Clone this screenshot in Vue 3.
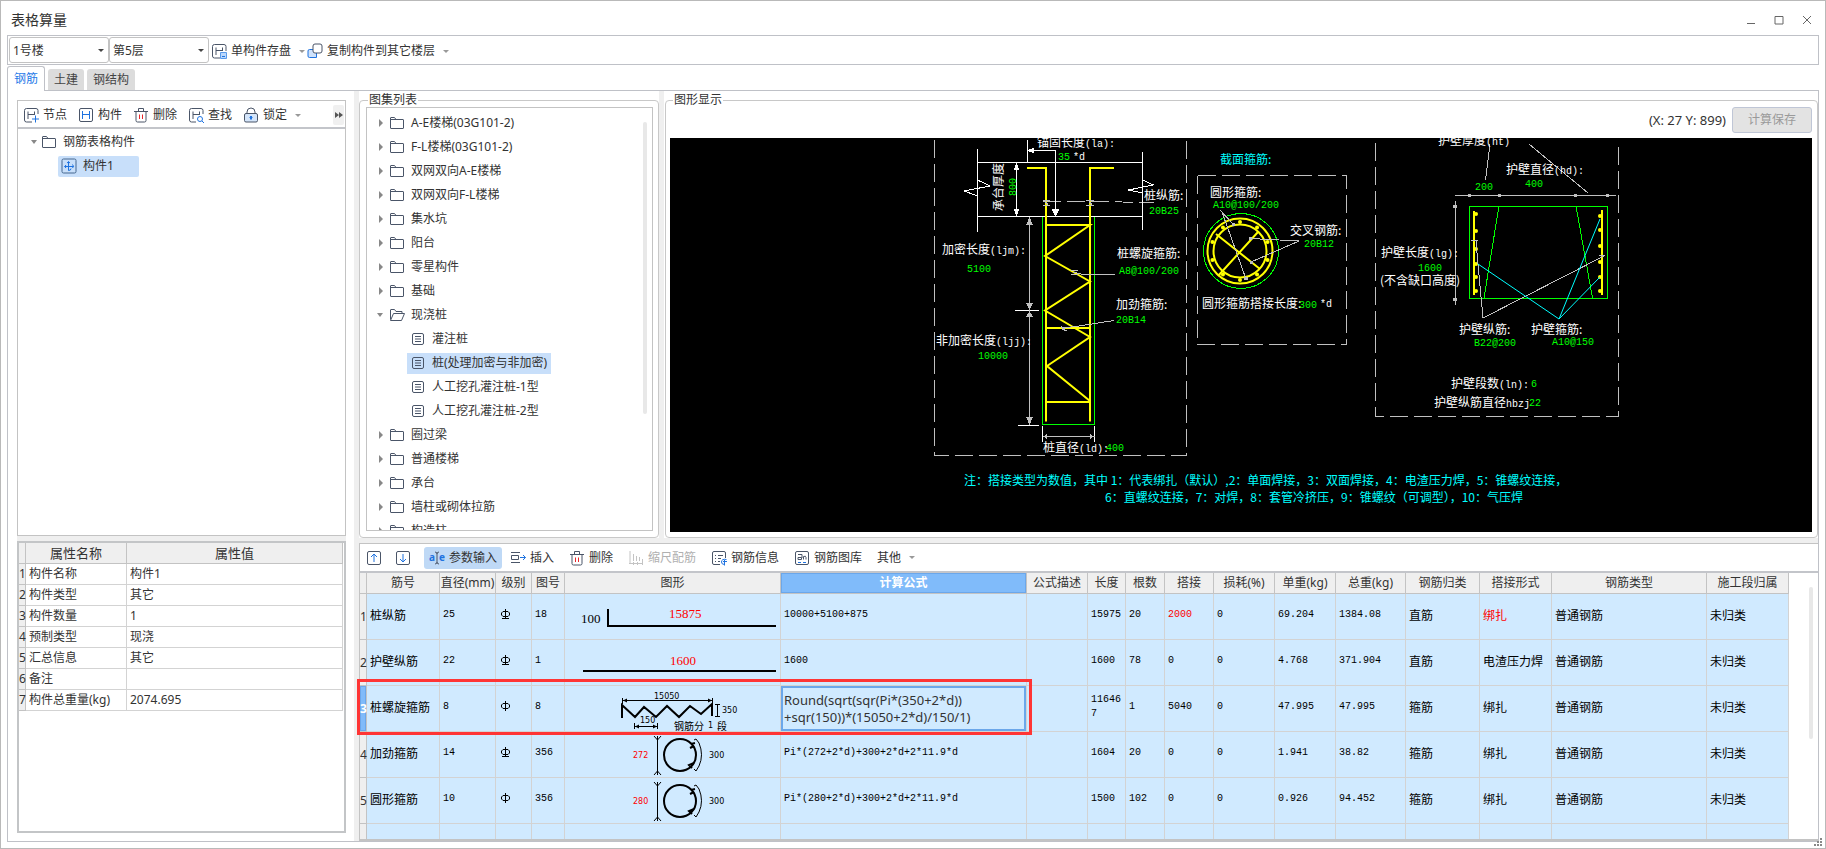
<script setup>
import { ref } from 'vue'

const building = ref('1号楼')
const floor = ref('第5层')

const icons = {
  save: '<path d="M9 15H3.500Q1.500 15 1.500 13V3.500Q1.500 1.500 3.500 1.500H13Q15 1.500 15 3.500V8"/><path d="M5 4.500V12M5 7.500H11.500M11.500 4.500V8" /><path fill="#bcd8fb" stroke="#5b9bea" d="M9.500 9.500H15.500V15.500H9.500Z"/><path fill="#fff" stroke="#1f73e0" d="M11 13.500H14"/>',
  copy: '<path fill="#cfe2fb" stroke="#1f73e0" d="M2.500 6.500H9.500V14.500H2.500Q1 14.500 1 13V8Q1 6.500 2.500 6.500Z"/><rect fill="#fff" x="6" y="1" width="9" height="9" rx="2"/>',
  node: '<path d="M9 15H3.500Q1.500 15 1.500 13V3.500Q1.500 1.500 3.500 1.500H13Q15 1.500 15 3.500V7"/><path d="M5 4.500V12M5 7.500H11.500M11.500 4.500V8"/><path stroke="#1f73e0" d="M12.500 8.500V15.500M9 12H16"/>',
  member: '<rect x="1.500" y="1.500" width="13" height="13" rx="1.500"/><path stroke="#1f73e0" d="M4.500 4V12M11.500 4V12M4.500 7.500H11.500"/>',
  trash: '<path d="M1 4.500H15M5.500 4V1.500H10.500V4M3 5V13.500Q3 15 4.500 15H11.500Q13 15 13 13.500V5"/><path stroke="#e8262b" d="M6.500 7.500V12M9.500 7.500V12"/>',
  find: '<path d="M8 15H3.500Q1.500 15 1.500 13V3.500Q1.500 1.500 3.500 1.500H13Q15 1.500 15 3.500V7"/><path d="M5 4.500V12M5 7.500H11.500M11.500 4.500V8"/><circle stroke="#1f73e0" cx="12" cy="12" r="2.500"/><path stroke="#1f73e0" d="M14 14L16 16"/>',
  lock: '<path d="M4 7V5Q4 1 8 1T12 5V7"/><rect x="1.500" y="6.500" width="13" height="8.500" rx="1.500" fill="#d4e5fa"/><path stroke="#1f73e0" stroke-width="2" d="M8 9V12.500"/><path stroke="#1f73e0" d="M6.500 10.500H9.500"/>',
  folder: '<path d="M1.500 13V3Q1.500 2.500 2 2.500H5.500L7 4.500H14Q14.500 4.500 14.500 5V13Q14.500 13.500 14 13.500H2Q1.500 13.500 1.500 13ZM1.500 4.500H7"/>',
  open: '<path d="M1.500 12.500V3Q1.500 2.500 2 2.500H5.500L7 4.500H13V6.500M1.500 13.500L4.500 6.500H15.500L12.500 13.500Z"/>',
  doc: '<rect x="2.500" y="2.500" width="11" height="11" rx="1.500"/><path d="M5 5.500H11M5 8H11M5 10.500H11"/>',
  rebar: '<rect x="1" y="1" width="14" height="14" rx="1.500" stroke="#44678f"/><path stroke="#1f73e0" d="M7.500 3.500V12.500M3.500 8.500H12.500M6 5Q7.500 2.500 9 5M11.500 6.500Q13.500 8.500 11.500 10M5 7Q2.500 8.500 5 10M7.500 12.500Q10 12.500 10 10.500"/>',
  up: '<rect x="1.500" y="1.500" width="13" height="13" rx="1.500"/><path stroke="#1f73e0" d="M8 4V12M5 7L8 4L11 7"/>',
  down: '<rect x="1.500" y="1.500" width="13" height="13" rx="1.500"/><path stroke="#1f73e0" d="M8 4V12M5 9L8 12L11 9"/>',
  insert: '<path d="M1 2.500H10M1 12.500H10M1.500 5.500H8.500V9.500H1.500Z"/><path stroke="#1f73e0" d="M10 7.500H15.500M13 5L15.500 7.500L13 10"/>',
  scale: '<path stroke="#c4c4c4" d="M2 1V14M5.500 4V11M8.500 6V11M11.500 7V11M1 13.500H14M5.500 12V15M9.500 12V15M14.500 9V15"/>',
  info: '<path d="M9 14.500H3Q1.500 14.500 1.500 13V3Q1.500 1.500 3 1.500H13Q14.500 1.500 14.500 3V8M4 5.500H5M7 5.500H12M4 8.500H5M7 8.500H10M4 11.500H5M7 11.500H9"/><path stroke="#1f73e0" d="M15.500 9.500Q10.500 8.500 10.500 12Q10.500 14.500 13.500 14.500M12 11.500H16M13.500 10V15.500"/>',
  library: '<rect x="1.500" y="1.500" width="13" height="13" rx="1.500"/><path d="M4 4.500H8V8M4 9.500V7.500H7.500V9.500H4M9.500 9.500V6.500Q12 5.500 12 7.500V9.500"/><path stroke="#1f73e0" d="M4 12.500H7M9 12.500H12"/>',
}

const tree = [
  { t: 'A-E楼梯(03G101-2)' }, { t: 'F-L楼梯(03G101-2)' }, { t: '双网双向A-E楼梯' }, { t: '双网双向F-L楼梯' },
  { t: '集水坑' }, { t: '阳台' }, { t: '零星构件' }, { t: '基础' }, { t: '现浇桩', open: true },
  { t: '灌注桩', leaf: true }, { t: '桩(处理加密与非加密)', leaf: true, sel: true },
  { t: '人工挖孔灌注桩-1型', leaf: true }, { t: '人工挖孔灌注桩-2型', leaf: true },
  { t: '圈过梁' }, { t: '普通楼梯' }, { t: '承台' }, { t: '墙柱或砌体拉筋' }, { t: '构造柱' },
]

const props = [
  ['构件名称', '构件1'], ['构件类型', '其它'], ['构件数量', '1'], ['预制类型', '现浇'],
  ['汇总信息', '其它'], ['备注', ''], ['构件总重量(kg)', '2074.695'],
]

const columns = [
  ['筋号', 73], ['直径(mm)', 56], ['级别', 36], ['图号', 33], ['图形', 216], ['计算公式', 246],
  ['公式描述', 61], ['长度', 38], ['根数', 39], ['搭接', 49], ['损耗(%)', 61], ['单重(kg)', 61],
  ['总重(kg)', 70], ['钢筋归类', 74], ['搭接形式', 72], ['钢筋类型', 155], ['施工段归属', 82],
]

const rows = [
  ['桩纵筋', '25', 'B', '18', '#L', '10000+5100+875', '', '15975', '20', '2000', '0', '69.204', '1384.08', '直筋', '绑扎', '普通钢筋', '未归类'],
  ['护壁纵筋', '22', 'B', '1', '#I', '1600', '', '1600', '78', '0', '0', '4.768', '371.904', '直筋', '电渣压力焊', '普通钢筋', '未归类'],
  ['桩螺旋箍筋', '8', 'A', '8', '#Z', 'Round(sqrt(sqr(Pi*(350+2*d))\n+sqr(150))*(15050+2*d)/150/1)', '', '116467', '1', '5040', '0', '47.995', '47.995', '箍筋', '绑扎', '普通钢筋', '未归类'],
  ['加劲箍筋', '14', 'B', '356', '272', 'Pi*(272+2*d)+300+2*d+2*11.9*d', '', '1604', '20', '0', '0', '1.941', '38.82', '箍筋', '绑扎', '普通钢筋', '未归类'],
  ['圆形箍筋', '10', 'A', '356', '280', 'Pi*(280+2*d)+300+2*d+2*11.9*d', '', '1500', '102', '0', '0', '0.926', '94.452', '箍筋', '绑扎', '普通钢筋', '未归类'],
  ['交叉钢筋', '', '', '', '', '', '', '', '', '', '', '', '', '直筋', '绑扎', '普通钢筋', '未归类'],
]
const isRed = (r, c) => r === 0 && (c === 9 || c === 14)
const isNum = (v) => /^[\x20-\x7e]+$/.test(v)

const white = [
  [1037, 147, '锚固长度', '(la):'], [942, 254, '加密长度', '(ljm):'], [936, 345, '非加密长度', '(ljj):'],
  [1144, 200, '桩纵筋:', ''], [1117, 258, '桩螺旋箍筋:', ''], [1116, 309, '加劲箍筋:', ''], [1043, 452, '桩直径', '(ld):'],
  [1210, 197, '圆形箍筋:', ''], [1290, 235, '交叉钢筋:', ''], [1202, 308, '圆形箍筋搭接长度:', ''],
  [1438, 145, '护壁厚度', '(ht)'], [1506, 174, '护壁直径', '(hd):'], [1381, 257, '护壁长度', '(lg):'],
  [1380, 285, '(不含缺口高度)', ''], [1459, 334, '护壁纵筋:', ''], [1531, 334, '护壁箍筋:', ''],
  [1451, 388, '护壁段数', '(ln):'], [1434, 407, '护壁纵筋直径', 'hbzj'],
  [1073, 160, '', '*d'], [1320, 307, '', '*d'],
]
const green = [
  [1058, 160, '35'], [967, 272, '5100'], [978, 359, '10000'], [1149, 214, '20B25'], [1119, 274, 'A8@100/200'],
  [1116, 323, '20B14'], [1106, 451, '400'], [1213, 208, 'A10@100/200'], [1304, 247, '20B12'], [1299, 308, '300'],
  [1525, 187, '400'], [1475, 190, '200'], [1418, 271, '1600'], [1474, 346, 'B22@200'], [1552, 345, 'A10@150'],
  [1531, 387, '6'], [1529, 406, '22'],
]
const ringDots = Array.from({ length: 10 }, (_, i) => {
  const a = (i * Math.PI) / 5 - Math.PI / 2
  return [1240 + 29 * Math.cos(a), 251 + 29 * Math.sin(a)]
})
const wallDots = [
  ...[214, 231, 249, 264, 277, 291].map((y) => [1476, y]),
  ...[216, 230, 246, 262, 277, 291].map((y) => [1600, y]),
]
</script>

<template>
  <main class="window">
    <header class="title">
      <h1>表格算量</h1>
      <div class="winbtns">
        <button aria-label="最小化"><svg width="10" height="10"><path d="M1 8.500H9" /></svg></button>
        <button aria-label="最大化"><svg width="10" height="10"><path d="M1 1.500H9V9H1Z" /></svg></button>
        <button aria-label="关闭"><svg width="10" height="10"><path d="M1 1L9 9M9 1L1 9" /></svg></button>
      </div>
    </header>

    <div class="topbar">
      <div class="combo"><select v-model="building" aria-label="楼栋"><option>1号楼</option></select><i class="caret dark"></i></div>
      <div class="combo"><select v-model="floor" aria-label="楼层"><option>第5层</option></select><i class="caret dark"></i></div>
      <button class="tool"><svg class="ico" viewBox="0 0 16 16" v-html="icons.save"></svg>单构件存盘<i class="caret"></i></button>
      <button class="tool"><svg class="ico" viewBox="0 0 16 16" v-html="icons.copy"></svg>复制构件到其它楼层<i class="caret"></i></button>
    </div>

    <nav class="tabs">
      <button class="tab on">钢筋</button>
      <button class="tab">土建</button>
      <button class="tab">钢结构</button>
    </nav>

    <div class="pane">
      <div class="left">
        <section class="tree-panel">
          <div class="bar">
            <button class="tool"><svg class="ico" viewBox="0 0 16 16" v-html="icons.node"></svg>节点</button>
            <button class="tool"><svg class="ico" viewBox="0 0 16 16" v-html="icons.member"></svg>构件</button>
            <button class="tool"><svg class="ico" viewBox="0 0 16 16" v-html="icons.trash"></svg>删除</button>
            <button class="tool"><svg class="ico" viewBox="0 0 16 16" v-html="icons.find"></svg>查找</button>
            <button class="tool"><svg class="ico" viewBox="0 0 16 16" v-html="icons.lock"></svg>锁定<i class="caret"></i></button>
            <button class="more" aria-label="更多"><svg width="8" height="6"><path d="M0 0L4 3L0 6ZM4 0L8 3L4 6Z" fill="#555" /></svg></button>
          </div>
          <ul class="members">
            <li><i class="arrow down"></i><svg class="ico" viewBox="0 0 16 16" v-html="icons.folder"></svg><span>钢筋表格构件</span></li>
            <li><span class="picked"><svg class="ico" viewBox="0 0 16 16" v-html="icons.rebar"></svg>构件1</span></li>
          </ul>
        </section>
        <div class="hsplit"></div>
        <section class="props">
          <table>
            <colgroup><col class="c0" /><col class="c1" /><col /></colgroup>
            <thead><tr><th></th><th>属性名称</th><th>属性值</th></tr></thead>
            <tbody>
              <tr v-for="(p, i) in props" :key="i"><th>{{ i + 1 }}</th><td>{{ p[0] }}</td><td>{{ p[1] }}</td></tr>
            </tbody>
          </table>
        </section>
      </div>
      <div class="vsplit"></div>
      <div class="right">
        <div class="upper">
          <fieldset class="atlas">
            <legend>图集列表</legend>
            <div class="listbox">
              <ul>
                <li v-for="n in tree" :key="n.t" :class="{ leaf: n.leaf }">
                  <i v-if="!n.leaf" class="arrow" :class="{ down: n.open }"></i>
                  <span class="node" :class="{ sel: n.sel }">
                    <svg class="ico" viewBox="0 0 16 16" v-html="n.leaf ? icons.doc : n.open ? icons.open : icons.folder"></svg>{{ n.t }}
                  </span>
                </li>
              </ul>
              <div class="thumb"></div>
            </div>
          </fieldset>
          <div class="vsplit"></div>
          <fieldset class="view">
            <legend>图形显示</legend>
            <div class="viewhead"><output>(X: 27 Y: 899)</output><button disabled>计算保存</button></div>
            <div class="canvas">
              <svg class="cad" width="100%" height="100%">
                <g transform="translate(-670 -138)" fill="none">
                  <g stroke="#c0c0c0" stroke-dasharray="18 6" shape-rendering="crispEdges">
                    <path d="M934.500 140V455.500H1186.500V138" />
                    <path d="M1197.500 175.500V344.500H1346.500M1197.500 175.500H1346.500V344.500" />
                    <path d="M1375.500 143V416.500H1618.500V143" />
                    <path d="M1043 201.500H1090L1154 202.500" />
                  </g>
                  <g stroke="#fff" shape-rendering="crispEdges">
                    <path d="M977.500 149V232M1142.500 152V230M977.500 162.500H1142.500M977.500 216.500H1142.500" />
                    <path d="M1027.500 140V162M1027 150.500H1055.500V216M1016.500 163V216" />
                    <path d="M977.500 180L990 186L964 191L977.500 196M1142.500 180L1153.500 185L1128.500 190L1142.500 193" />
                    <path d="M1015 310.500H1039M1018 425.500H1039M1042.500 426V442M1094.500 426V442" />
                    <path fill="#fff" stroke="none" d="M1027 150.500L1034 147.500V153.500ZM1051.500 209H1059.500L1055.500 217ZM1013.500 170H1019.500L1016.500 163ZM1013.500 209H1019.500L1016.500 216Z" />
                  </g>
                  <g stroke="#0f0" shape-rendering="crispEdges">
                    <path d="M1042.500 217V424.500H1094.500V217" />
                    <path d="M1469.500 206.500H1607.500V298.500H1469.500ZM1499 206L1484 298M1576 206L1592.500 298" />
                    <circle cx="1241" cy="251" r="37.500" />
                  </g>
                  <g stroke="#ff0" stroke-width="2">
                    <path d="M1027 168H1046V421.500M1114 168H1090V421.500" />
                    <path d="M1046 225H1090L1045 256L1090 281.500L1045 310.500L1090 337L1047 366L1090 401M1046 328H1090M1046 402H1090" />
                    <circle cx="1240" cy="251" r="32.500" /><circle cx="1240" cy="251" r="26.500" />
                    <path d="M1216 234L1260 269M1258 232L1218 276M1474 211V295M1602 210V295" />
                  </g>
                  <g fill="#ff0">
                    <circle v-for="(d, i) in ringDots" :key="i" :cx="d[0]" :cy="d[1]" r="2" />
                    <circle v-for="(d, i) in wallDots" :key="'w' + i" :cx="d[0]" :cy="d[1]" r="2" />
                  </g>
                  <g stroke="#c0c0c0" shape-rendering="crispEdges">
                    <path d="M1029.500 218V424M1042.500 436.500H1094.500" />
                    <path fill="#c0c0c0" stroke="none" d="M1026 225H1033L1029.500 217ZM1026 303H1033L1029.500 310ZM1026 317H1033L1029.500 311ZM1026 417H1033L1029.500 425ZM1043 436.500L1047 434V439ZM1094 436.500L1090 434V439Z" />
                    <path d="M1043 200.500H1050M1043 205.500H1050M1044 200L1049 206M1086 200.500H1094M1086 205.500H1094M1088 200L1093 206" />
                    <path d="M1071 270.500H1078M1071 274.500H1078M1073 272L1083 274.500H1115M1063 328L1079 326L1114 320.500M1061 326L1064 330H1067" />
                    <path d="M1220 210L1233 224M1222 212L1246 279M1250 238.500L1299 241L1251 262" />
                    <path d="M1490 144L1485.500 180M1529 144L1588 193M1455 195.500H1616M1455.500 201V305" />
                    <path d="M1471 240.500H1478M1476 241L1478 264L1483 318L1604 256M1599 255.500H1605" />
                    <path fill="#c0c0c0" stroke="none" d="M1249 237H1252V240H1249ZM1250 261H1253V264H1250ZM1232 223H1235V226H1232ZM1244 277H1248V280H1244ZM1468 194H1471V197H1468ZM1498 194H1501V197H1498ZM1574 194H1577V197H1574ZM1606 194H1609V197H1606ZM1453 205H1457V208H1453ZM1453 298H1457V301H1453ZM1062 327H1065V330H1062Z" />
                  </g>
                  <path stroke="#0ff" d="M1478 264L1559 319L1600 219M1559 319L1600 277" />
                  <g fill="#fff">
                    <text v-for="(w, i) in white" :key="i" :x="w[0]" :y="w[1]">{{ w[2] }}<tspan class="mono">{{ w[3] }}</tspan></text>
                    <text transform="translate(1003 211) rotate(-90)">承台厚度</text>
                  </g>
                  <g fill="#0f0" class="mono">
                    <text v-for="(g, i) in green" :key="i" :x="g[0]" :y="g[1]">{{ g[2] }}</text>
                    <text transform="translate(1016 196) rotate(-90)">800</text>
                  </g>
                  <g fill="#0ff">
                    <text x="1220" y="164">截面箍筋:</text>
                    <text x="964" y="485">注：搭接类型为数值，其中 1：代表绑扎（默认）,2：单面焊接，3：双面焊接，4：电渣压力焊，5：锥螺纹连接，</text>
                    <text x="1105" y="502">6：直螺纹连接，7：对焊，8：套管冷挤压，9：锥螺纹（可调型），10：气压焊</text>
                  </g>
                </g>
              </svg>
            </div>
          </fieldset>
        </div>
        <div class="hsplit"></div>
        <section class="lower">
          <div class="bar">
            <button class="tool" aria-label="上移"><svg class="ico" viewBox="0 0 16 16" v-html="icons.up"></svg></button>
            <button class="tool" aria-label="下移"><svg class="ico" viewBox="0 0 16 16" v-html="icons.down"></svg></button>
            <button class="tool active">
              <svg class="ico" viewBox="0 0 16 16"><text x="0" y="11" class="ae">a</text><text x="10" y="11" class="ae">e</text><path d="M6 2Q8 2 8 4V12Q8 14 6 14M10 2Q8 2 8 4M8 12Q8 14 10 14" /></svg>参数输入
            </button>
            <button class="tool"><svg class="ico" viewBox="0 0 16 16" v-html="icons.insert"></svg>插入</button>
            <button class="tool"><svg class="ico" viewBox="0 0 16 16" v-html="icons.trash"></svg>删除</button>
            <button class="tool" disabled><svg class="ico" viewBox="0 0 16 16" v-html="icons.scale"></svg>缩尺配筋</button>
            <button class="tool"><svg class="ico" viewBox="0 0 16 16" v-html="icons.info"></svg>钢筋信息</button>
            <button class="tool"><svg class="ico" viewBox="0 0 16 16" v-html="icons.library"></svg>钢筋图库</button>
            <button class="tool">其他<i class="caret"></i></button>
          </div>
          <div class="grid">
            <table>
              <colgroup><col class="c0" /><col v-for="c in columns" :key="c[0]" :style="{ width: c[1] + 'px' }" /></colgroup>
              <thead>
                <tr><th></th><th v-for="(c, i) in columns" :key="c[0]" :class="{ cur: i === 5 }">{{ c[0] }}</th></tr>
              </thead>
              <tbody>
                <tr v-for="(r, ri) in rows" :key="ri">
                  <th :class="{ cur: ri === 2 }">{{ ri + 1 }}</th>
                  <td v-for="(v, ci) in r" :key="ci" :class="{ num: isNum(v), red: isRed(ri, ci), edit: ri === 2 && ci === 5, shape: ci === 4 }">
                    <svg v-if="ci === 2 && v" class="grade" width="9" height="11" fill="none" stroke="#000">
                      <path d="M4.500 0V10M2 2.500H7L8.500 4V6L7 7.500H2L0.500 6V4Z" /><path v-if="v === 'B'" d="M1 9.500H8" />
                    </svg>
                    <svg v-else-if="ci === 4 && v" class="draw" width="215" height="45" fill="none" stroke="#000">
                      <template v-if="v === '#L'">
                        <path stroke-width="2" d="M43 15V32H211" /><text x="16" y="29">100</text><text x="104" y="24" class="r">15875</text>
                      </template>
                      <template v-else-if="v === '#I'">
                        <path stroke-width="2" d="M18 31H211" /><text x="105" y="25" class="r">1600</text>
                      </template>
                      <template v-else-if="v === '#Z'">
                        <path stroke-width="2" d="M57 32V19L70 31L79 21L91 31L102 20L114 31L125 20L136 28L147 18V30" />
                        <path d="M57.500 12V18M147.500 12V18M57 14.500H147M150 18.500H155M150 30.500H155M152.500 19V30M69.500 37V43M92.500 37V43M70 40.500H92" />
                        <path fill="#000" stroke="none" d="M58 14.500L62 12.500V16.500ZM147 14.500L143 12.500V16.500ZM70 40.500L74 38.500V42.500ZM92 40.500L88 38.500V42.500Z" />
                        <g class="s"><text x="89" y="13">15050</text><text x="157" y="27">350</text><text x="75" y="37">150</text><text x="143" y="42">1</text></g>
                        <g class="z"><text x="109" y="44">钢筋分</text><text x="152" y="44">段</text></g>
                      </template>
                      <template v-else>
                        <circle cx="115" cy="23" r="16" stroke-width="2" />
                        <path d="M92.500 4V43M89 4L92.500 8L96 4M89 43L92.500 39L96 43M129 8L131 7L134 11Q139 23 134 34L131 39L129 37" />
                        <path stroke-width="2" d="M129 14L125 16M130 11L126 12M129 31L124 33L127 36" />
                        <g class="s"><text x="68" y="26" class="r">{{ v }}</text><text x="144" y="26">300</text></g>
                      </template>
                    </svg>
                    <template v-else>{{ v }}</template>
                  </td>
                </tr>
              </tbody>
            </table>
            <div class="thumb"></div>
          </div>
          <div class="mark"></div>
        </section>
      </div>
    </div>
    <svg class="grip" width="8" height="8"><path d="M6 0H8V2H6ZM6 3H8V5H6ZM3 3H5V5H3ZM6 6H8V8H6ZM3 6H5V8H3ZM0 6H2V8H0Z" fill="#888" /></svg>
  </main>
</template>

<style>
body { margin: 0; }
</style>

<style scoped>
.window { position: relative; box-sizing: border-box; height: 100vh; min-height: 640px; display: flex; flex-direction: column; padding: 0 6px 6px; border: 1px solid #b9b9b9; background: #fff; color: #333; font: 12px/18px "Noto Sans", "Noto Sans CJK SC", sans-serif; overflow: hidden; }
.window * { box-sizing: border-box; }
button { border: 0; background: none; padding: 0; font: inherit; color: inherit; display: inline-flex; align-items: center; white-space: nowrap; }
ul { list-style: none; margin: 0; padding: 0; }
table { border-collapse: separate; border-spacing: 0; table-layout: fixed; }
.title { flex: 0 0 34px; display: flex; align-items: center; justify-content: space-between; padding: 4px 7px 0 4px; }
h1 { margin: 0; font-size: 14px; line-height: 20px; font-weight: 400; }
.winbtns { display: flex; gap: 18px; }
.winbtns svg { fill: none; stroke: #666; }
.topbar { flex: 0 0 30px; display: flex; align-items: center; border: 1px solid #bfc1c7; padding-left: 1px; }
.combo { position: relative; width: 100px; height: 26px; }
select { appearance: none; width: 100%; height: 100%; border: 1px solid #c3c3c3; border-radius: 3px; background: #fff; padding: 1px 3px 0; font: inherit; color: inherit; }
.caret { width: 0; height: 0; border: 3px solid transparent; border-top: 3px solid #999; border-bottom: 0; margin-left: 8px; }
.combo .caret { position: absolute; right: 5px; top: 12px; margin: 0; }
.caret.dark { border-top-color: #444; }
.ico { width: 16px; height: 16px; flex: none; fill: none; stroke: #4a5568; overflow: visible; }
.tool .ico { margin-right: 4px; }
.topbar .tool { margin-left: 2px; padding-top: 2px; }
.tabs { flex: 0 0 26px; display: flex; align-items: flex-end; margin-bottom: -1px; z-index: 1; }
.tab { height: 21px; padding: 0 6px; margin: 0 3px 1px 0; background: #dcdcdc; border-radius: 3px 3px 0 0; color: #444; }
.tab.on { height: 25px; margin-bottom: 0; background: #fff; border: 1px solid #bfc1c7; border-bottom: 0; color: #1f7ae8; }
.pane { flex: 1; min-height: 0; display: flex; border: 1px solid #bfc1c7; }
.left { flex: 0 0 346px; display: flex; flex-direction: column; padding: 9px 8px 8px 9px; }
.tree-panel { flex: 1; min-height: 0; border: 1px solid #c3c3c3; }
.bar { display: flex; align-items: center; height: 28px; border-bottom: 2px solid #c3c5ca; }
.left .bar { padding: 2px 0 0 5px; gap: 11px; }
.more { margin: 0 1px 0 auto; width: 11px; height: 20px; justify-content: center; background: #f0f0f0; border-radius: 2px; }
.members { padding-top: 1px; }
.members li { display: flex; align-items: center; height: 24px; padding-left: 13px; }
.members li span { margin-left: 6px; }
.members .picked { display: flex; align-items: center; width: 81px; height: 21px; margin-left: 27px; padding-left: 3px; gap: 6px; background: #c8dffa; border-radius: 2px; }
.arrow { width: 0; height: 0; border: 4px solid transparent; border-left: 4px solid #888; border-right: 0; margin: 0 6px 0 2px; }
.arrow.down { border: 3px solid transparent; border-top: 4px solid #888; border-bottom: 0; margin: 0 6px 0 0; }
.members .arrow.down { margin-right: 4px; }
.hsplit { flex: 0 0 5px; background: #efefef; }
.vsplit { flex: 0 0 5px; background: #efefef; }
.props { flex: 0 0 292px; border: 2px solid #c3c5c7; }
.props table { width: 324px; max-width: 100%; }
col.c0 { width: 7px; }
col.c1 { width: 101px; }
th { background: #efefef; font-weight: 400; border-right: 1px solid #c3c3c3; border-bottom: 1px solid #c3c3c3; padding: 0; white-space: nowrap; color: #333; }
td { border-right: 1px solid #d3d3d3; border-bottom: 1px solid #d3d3d3; padding: 0 3px; }
.props th, .props td { height: 21px; line-height: 20px; }
.props thead th { font-size: 13px; }
.right { flex: 1; min-width: 0; display: flex; flex-direction: column; }
.upper { flex: 1; min-height: 0; display: flex; }
.upper .vsplit { margin: 0 1px 0 0; }
fieldset { display: flex; flex-direction: column; min-width: 0; margin: 2px 0 0; border: 1px solid #c8c8c8; border-radius: 4px; }
legend { padding: 0 1px; margin-left: 2px; line-height: 14px; }
.atlas { flex: 0 0 300px; padding: 0 5px 6px 6px; }
.view { flex: 1; padding: 0 5px 5px 4px; }
.view legend { margin-left: 3px; }
.listbox { position: relative; flex: 1; min-height: 0; height: 100%; border: 1px solid #c3c3c3; overflow: hidden; padding: 3px 0 0 9px; }
.listbox li { display: flex; align-items: center; height: 24px; padding-left: 1px; }
.listbox li.leaf { padding-left: 31px; }
.node { display: flex; align-items: center; height: 21px; gap: 6px; white-space: nowrap; }
.leaf .node { padding: 0 4px 0 3px; gap: 6px; }
.sel { background: #c8dffa; }
.thumb { position: absolute; right: 5px; top: 14px; width: 4px; height: 292px; border-radius: 2px; background: #e8e8e8; }
.grid .thumb { height: 152px; }
.viewhead { flex: 0 0 31px; display: flex; justify-content: flex-end; align-items: flex-start; gap: 6px; }
.viewhead output { font-size: 13px; line-height: 26px; }
.viewhead button { width: 80px; height: 26px; justify-content: center; background: #e3e3e3; border: 1px solid #bfc6d6; border-radius: 3px; color: #9a9a9a; }
.canvas { flex: 1; min-height: 0; background: #000; overflow: hidden; }
.cad { display: block; font: 12px "Noto Sans CJK SC", sans-serif; }
.cad text { stroke: none; }
.mono { font-family: "Liberation Mono", monospace; font-size: 10px; }
.lower { position: relative; flex: 0 0 298px; min-height: 0; display: flex; flex-direction: column; border: 1px solid #c3c3c3; border-width: 1px 0 2px 1px; }
.lower .bar { flex: 0 0 29px; padding-left: 6px; gap: 15px; }
.lower .tool:nth-child(-n+2) { margin-right: -6px; }
.lower .tool:nth-child(3) { margin-right: -7px; }
.lower .tool.active { height: 22px; padding: 0 5px; background: #bfd9f6; border-radius: 3px; }
.ae { font: bold 10px "Noto Sans", sans-serif; fill: #1f73e0; stroke: none; }
.tool:disabled { color: #b0b0b0; }
.grid { position: relative; flex: 1; min-height: 0; overflow: hidden; }
.grid table { width: 1429px; }
.grid thead th { height: 21px; line-height: 20px; }
.grid td { height: 46px; padding-bottom: 4px; line-height: 14px; background: #d0eaff; color: #000; font-family: "Noto Sans CJK SC", sans-serif; word-break: break-all; }
.grid td.num { font-family: "Liberation Mono", monospace; font-size: 10px; }
.grid td.shape { padding: 0; }
.grid td.red { color: #f00; }
.grid th.cur { background: #80bbfa; color: #fff; font-weight: 700; box-shadow: inset 0 0 0 1px #6ba7ea; }
.grid td.edit { padding-bottom: 0; font: 13px/17px "Noto Sans", sans-serif; white-space: pre; box-shadow: inset 0 0 0 2px #6ba7ea; color: #333; }
.grade { display: block; margin: 0 auto 0 2px; }
.draw { display: block; font: 13px "Liberation Serif", serif; }
.draw text { fill: #000; stroke: none; }
.draw .s { font: 8px "DejaVu Sans", sans-serif; }
.draw .z { font: 10px "Noto Sans CJK SC", sans-serif; }
.draw text.r { fill: #f00; }
.mark { position: absolute; left: -3px; top: 135px; width: 675px; height: 56px; border: 3px solid #ff3535; }
.grip { position: absolute; right: 3px; bottom: 2px; }
</style>
